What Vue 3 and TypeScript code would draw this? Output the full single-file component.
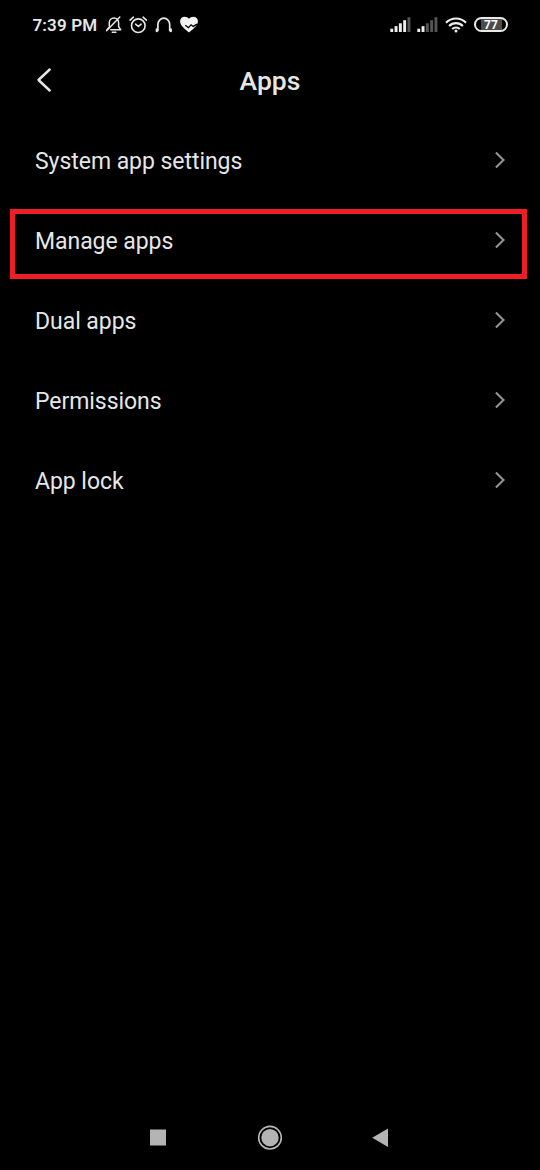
<script setup lang="ts">
interface Row {
  label: string
  highlighted?: boolean
}

interface Bar {
  x: number
  top: number
}

const rows: Row[] = [
  { label: 'System app settings' },
  { label: 'Manage apps', highlighted: true },
  { label: 'Dual apps' },
  { label: 'Permissions' },
  { label: 'App lock' },
]

const bars: Bar[] = [
  { x: 0.3, top: 11.7 },
  { x: 4.6, top: 9.1 },
  { x: 8.9, top: 6.3 },
  { x: 13.2, top: 3.2 },
  { x: 17.5, top: 0.2 },
]

// Number of lit bars for each SIM slot
const sims: number[] = [4, 2]
</script>

<template>
  <div class="screen">
    <header class="status">
      <span class="clock">7:39 PM</span>
      <svg class="bell" width="18" height="20" viewBox="0 0 18 20" fill="none" stroke="#e8e8e8" stroke-width="1.5" stroke-linecap="round" stroke-linejoin="round">
        <path d="M4.300 11V7.600C4.300 4.900 6.400 2.900 9 2.900s4.600 2 4.600 4.700V11.500l2.100 3.300H5.800M2 14.800l1.800-2.300M7.300 17.200h3.600M1.600 15.800L14.800 2" />
      </svg>
      <svg class="alarm" width="20" height="20" viewBox="0 0 20 20" fill="none" stroke="#e8e8e8" stroke-width="1.600" stroke-linecap="round" stroke-linejoin="round">
        <circle cx="10.300" cy="10.700" r="6.800" />
        <path d="M7.600 9.200l2.800 2.300 2.700-2.300M2.100 5.200l3.300-3M18.400 5.200l-3.300-3" />
      </svg>
      <svg class="phones" width="20" height="20" viewBox="0 0 20 20" fill="none" stroke="#e8e8e8" stroke-linecap="round">
        <path d="M3.900 15.500V9.500a5.900 6.300 0 0 1 11.800 0v6" stroke-width="1.700" />
        <path d="M2.800 14.500v1.700M16.800 14.500v1.700" stroke-width="2.300" />
      </svg>
      <svg class="heart" width="20" height="20" viewBox="0 0 20 20">
        <path d="M10 17.500C6.200 14.100 1.100 10.900 1.100 6.300 1.100 3.400 3.200 1.800 5.500 1.800 7.400 1.800 9.100 2.600 10 3.700 10.900 2.600 12.600 1.800 14.500 1.800c2.300 0 4.400 1.600 4.400 4.500 0 4.600-5.100 7.800-8.900 11.200z" fill="#f4f4f4" />
        <path d="M6.300 10.200l3.100 2.500 2.700-2.900 2.100 1.600 4-2.300" fill="none" stroke="#000" stroke-width="1.300" />
      </svg>
      <div class="system">
        <svg v-for="(lit, i) in sims" :key="i" class="signal" width="21" height="16" viewBox="0 0 21 16">
          <rect
            v-for="(bar, n) in bars"
            :key="n"
            :x="bar.x"
            :y="bar.top"
            width="2.900"
            :height="15 - bar.top"
            :fill="n < lit ? '#eeeeee' : '#555555'"
          />
        </svg>
        <svg class="wifi" width="22" height="17" viewBox="0 0 22 17" fill="none" stroke="#eee" stroke-width="2.100">
          <path d="M1 5.700a14 14 0 0 1 20 0M4.100 9a9.700 9.700 0 0 1 13.800 0M7.200 12.100a5.400 5.400 0 0 1 7.600 0" />
          <circle cx="11" cy="14.100" r="1.500" fill="#eee" stroke="none" />
        </svg>
        <div class="battery"><span class="level">77</span></div>
      </div>
    </header>

    <div class="titlebar">
      <svg class="back" width="18" height="26" viewBox="0 0 18 26" fill="none" stroke="#e8e8e8" stroke-width="2.400" stroke-linecap="round" stroke-linejoin="round">
        <path d="M14.700 2.500L3.500 13 14.700 23.500" />
      </svg>
      <h1>Apps</h1>
    </div>

    <main class="list">
      <div v-for="row in rows" :key="row.label" class="row" :class="{ highlighted: row.highlighted }">
        <span class="label">{{ row.label }}</span>
        <svg width="12" height="18" viewBox="0 0 12 18" fill="none" stroke="#929292" stroke-width="2.100">
          <path d="M1.900 1.600L9.500 9 1.900 16.400" />
        </svg>
      </div>
    </main>

    <nav class="navbar">
      <svg width="26" height="26" viewBox="0 0 26 26"><rect x="5" y="4.500" width="16" height="16" fill="#b4b4b4" /></svg>
      <svg width="26" height="26" viewBox="0 0 26 26">
        <circle cx="13" cy="12.700" r="11.300" fill="none" stroke="#b8b8b8" stroke-width="1.600" />
        <circle cx="13" cy="12.700" r="8.700" fill="#b4b4b4" />
      </svg>
      <svg width="26" height="26" viewBox="0 0 26 26"><path d="M5.200 12.700L21 3.500v18.500z" fill="#b4b4b4" /></svg>
    </nav>
  </div>
</template>

<style>
html,
body {
  background: #000;
}
</style>

<style scoped>
.screen {
  display: flex;
  flex-direction: column;
  width: 540px;
  height: 1170px;
  background: #000;
  color: #e6e6e6;
  font-family: Roboto, "Liberation Sans", sans-serif;
  overflow: hidden;
}

svg {
  display: block;
  flex: none;
}

.status {
  display: flex;
  align-items: center;
  box-sizing: border-box;
  height: 50px;
  padding: 0 32px 0 32.500px;
}

.clock {
  width: 72.500px;
  font-size: 17px;
  font-weight: 600;
  letter-spacing: 0.13px;
  line-height: 20px;
  white-space: nowrap;
}

.alarm {
  margin-left: 5px;
}

.phones {
  margin-left: 6px;
}

.heart {
  margin-left: 5px;
}

.system {
  display: flex;
  align-items: center;
  margin-left: auto;
}

.signal {
  margin-right: 6px;
}

.wifi {
  margin: 0 7px 0 1px;
}

.battery {
  display: flex;
  align-items: center;
  justify-content: center;
  box-sizing: border-box;
  width: 34px;
  height: 15px;
  margin-bottom: 1px;
  border: 2px solid #e8e8e8;
  border-radius: 8px;
  background: linear-gradient(90deg, #000 5px, #4c4c4c 5px 26px, #000 26px);
}

.level {
  font-size: 12px;
  font-weight: 700;
  line-height: 12px;
  color: #fff;
}

.titlebar {
  display: grid;
  grid-template-columns: 35px 1fr 35px;
  align-items: center;
  height: 60px;
}

.back {
  margin-left: 35px;
}

h1 {
  margin: 2px 0 0;
  text-align: center;
  font-size: 26.500px;
  font-weight: 500;
  line-height: 32px;
}

.list {
  display: flex;
  flex-direction: column;
  gap: 10px;
  padding: 15px 13px 0 10px;
  margin-top: 4px;
}

.row {
  display: flex;
  align-items: center;
  justify-content: space-between;
  box-sizing: border-box;
  height: 70px;
  padding: 0 16px 8px 20px;
  border: 5px solid transparent;
}

.row.highlighted {
  border-color: #ec1f27;
}

.label {
  font-size: 23px;
  letter-spacing: -0.05px;
  line-height: 28px;
  margin-top: 4px;
}

.navbar {
  display: flex;
  justify-content: space-between;
  margin-top: auto;
  padding: 0 147px 19px 145px;
}

.navbar svg:nth-child(2) {
  margin-left: 2px;
}
</style>
